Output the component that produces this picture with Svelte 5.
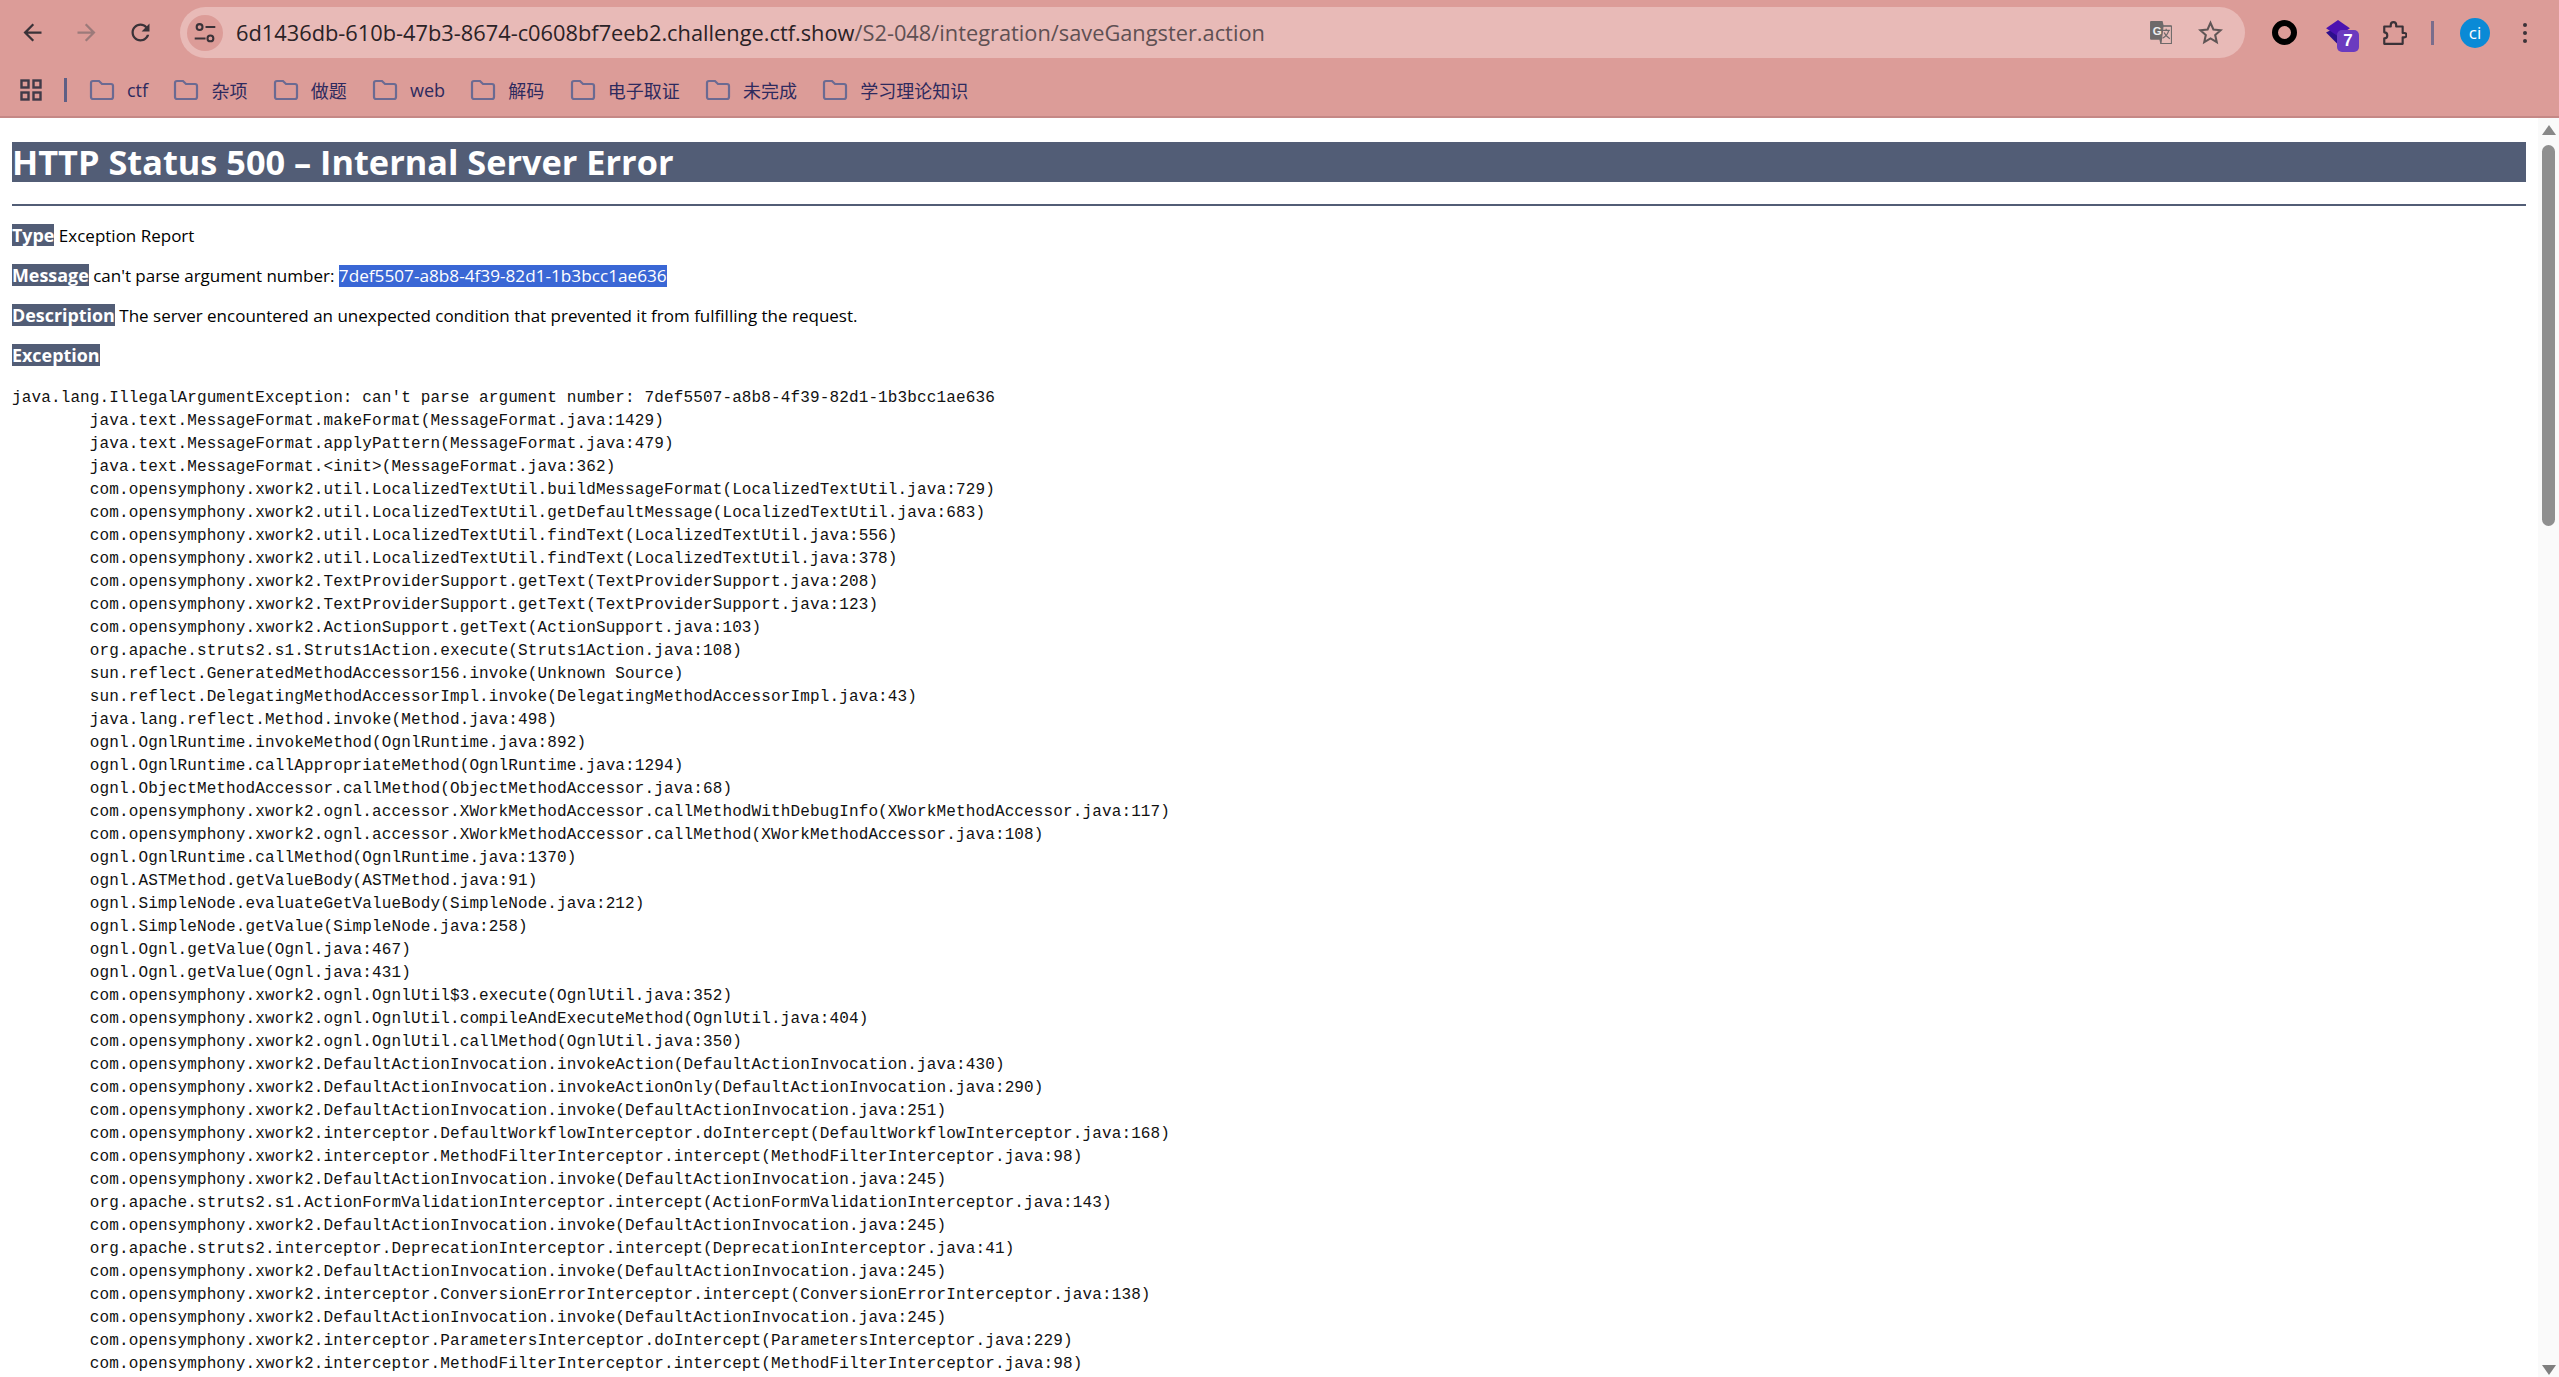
<script>
  const bookmarks = ['ctf', '杂项', '做题', 'web', '解码', '电子取证', '未完成', '学习理论知识'];

  const frames = [
    'java.text.MessageFormat.makeFormat(MessageFormat.java:1429)',
    'java.text.MessageFormat.applyPattern(MessageFormat.java:479)',
    'java.text.MessageFormat.<init>(MessageFormat.java:362)',
    'com.opensymphony.xwork2.util.LocalizedTextUtil.buildMessageFormat(LocalizedTextUtil.java:729)',
    'com.opensymphony.xwork2.util.LocalizedTextUtil.getDefaultMessage(LocalizedTextUtil.java:683)',
    'com.opensymphony.xwork2.util.LocalizedTextUtil.findText(LocalizedTextUtil.java:556)',
    'com.opensymphony.xwork2.util.LocalizedTextUtil.findText(LocalizedTextUtil.java:378)',
    'com.opensymphony.xwork2.TextProviderSupport.getText(TextProviderSupport.java:208)',
    'com.opensymphony.xwork2.TextProviderSupport.getText(TextProviderSupport.java:123)',
    'com.opensymphony.xwork2.ActionSupport.getText(ActionSupport.java:103)',
    'org.apache.struts2.s1.Struts1Action.execute(Struts1Action.java:108)',
    'sun.reflect.GeneratedMethodAccessor156.invoke(Unknown Source)',
    'sun.reflect.DelegatingMethodAccessorImpl.invoke(DelegatingMethodAccessorImpl.java:43)',
    'java.lang.reflect.Method.invoke(Method.java:498)',
    'ognl.OgnlRuntime.invokeMethod(OgnlRuntime.java:892)',
    'ognl.OgnlRuntime.callAppropriateMethod(OgnlRuntime.java:1294)',
    'ognl.ObjectMethodAccessor.callMethod(ObjectMethodAccessor.java:68)',
    'com.opensymphony.xwork2.ognl.accessor.XWorkMethodAccessor.callMethodWithDebugInfo(XWorkMethodAccessor.java:117)',
    'com.opensymphony.xwork2.ognl.accessor.XWorkMethodAccessor.callMethod(XWorkMethodAccessor.java:108)',
    'ognl.OgnlRuntime.callMethod(OgnlRuntime.java:1370)',
    'ognl.ASTMethod.getValueBody(ASTMethod.java:91)',
    'ognl.SimpleNode.evaluateGetValueBody(SimpleNode.java:212)',
    'ognl.SimpleNode.getValue(SimpleNode.java:258)',
    'ognl.Ognl.getValue(Ognl.java:467)',
    'ognl.Ognl.getValue(Ognl.java:431)',
    'com.opensymphony.xwork2.ognl.OgnlUtil$3.execute(OgnlUtil.java:352)',
    'com.opensymphony.xwork2.ognl.OgnlUtil.compileAndExecuteMethod(OgnlUtil.java:404)',
    'com.opensymphony.xwork2.ognl.OgnlUtil.callMethod(OgnlUtil.java:350)',
    'com.opensymphony.xwork2.DefaultActionInvocation.invokeAction(DefaultActionInvocation.java:430)',
    'com.opensymphony.xwork2.DefaultActionInvocation.invokeActionOnly(DefaultActionInvocation.java:290)',
    'com.opensymphony.xwork2.DefaultActionInvocation.invoke(DefaultActionInvocation.java:251)',
    'com.opensymphony.xwork2.interceptor.DefaultWorkflowInterceptor.doIntercept(DefaultWorkflowInterceptor.java:168)',
    'com.opensymphony.xwork2.interceptor.MethodFilterInterceptor.intercept(MethodFilterInterceptor.java:98)',
    'com.opensymphony.xwork2.DefaultActionInvocation.invoke(DefaultActionInvocation.java:245)',
    'org.apache.struts2.s1.ActionFormValidationInterceptor.intercept(ActionFormValidationInterceptor.java:143)',
    'com.opensymphony.xwork2.DefaultActionInvocation.invoke(DefaultActionInvocation.java:245)',
    'org.apache.struts2.interceptor.DeprecationInterceptor.intercept(DeprecationInterceptor.java:41)',
    'com.opensymphony.xwork2.DefaultActionInvocation.invoke(DefaultActionInvocation.java:245)',
    'com.opensymphony.xwork2.interceptor.ConversionErrorInterceptor.intercept(ConversionErrorInterceptor.java:138)',
    'com.opensymphony.xwork2.DefaultActionInvocation.invoke(DefaultActionInvocation.java:245)',
    'com.opensymphony.xwork2.interceptor.ParametersInterceptor.doIntercept(ParametersInterceptor.java:229)',
    'com.opensymphony.xwork2.interceptor.MethodFilterInterceptor.intercept(MethodFilterInterceptor.java:98)'
  ];

  const uuid = '7def5507-a8b8-4f39-82d1-1b3bcc1ae636';
  const trace = `java.lang.IllegalArgumentException: can't parse argument number: ${uuid}\n` + frames.map((f) => '\t' + f).join('\n');
</script>

<div class="window">
  <header class="chrome">
    <div class="toolbar">
      <div class="nav">
        <svg viewBox="0 0 24 24" class="icon"><path d="M20 11H7.830l5.590-5.590L12 4l-8 8 8 8 1.410-1.410L7.830 13H20v-2z" fill="#3a3238"/></svg>
        <svg viewBox="0 0 24 24" class="icon"><path d="M12 4l-1.410 1.410L16.170 11H4v2h12.170l-5.580 5.590L12 20l8-8z" fill="#9c7a7a"/></svg>
        <svg viewBox="0 0 24 24" class="icon"><path d="M17.650 6.350C16.200 4.900 14.210 4 12 4c-4.420 0-7.990 3.580-7.990 8s3.570 8 7.990 8c3.730 0 6.840-2.550 7.730-6h-2.080c-.82 2.330-3.040 4-5.650 4-3.310 0-6-2.690-6-6s2.690-6 6-6c1.660 0 3.140.69 4.220 1.780L13 11h7V4l-2.350 2.350z" fill="#3a3238"/></svg>
      </div>
      <div class="omnibox">
        <span class="tune">
          <svg viewBox="0 0 24 24" width="26" height="26"><g fill="none" stroke="#3a3238" stroke-width="1.900"><circle cx="7" cy="6.500" r="2.700"/><circle cx="17" cy="17" r="2.700"/><path d="M12.500 6.500h9M2.500 17h10"/></g></svg>
        </span>
        <span class="url">6d1436db-610b-47b3-8674-c0608bf7eeb2.challenge.ctf.show<span class="path">/S2-048/integration/saveGangster.action</span></span>
        <svg viewBox="0 0 24 24" class="translate"><path d="M2 1h11l1 4h7a1 1 0 0 1 1 1v16a1 1 0 0 1-1 1H11l-1-4H2a1 1 0 0 1-1-1V2a1 1 0 0 1 1-1z" fill="#6e6a6a"/><path d="M13.500 6H21.500V22.500H11.500z" fill="#e8bcb8" stroke="#6e6a6a"/><text x="3.500" y="14" font-family="Liberation Sans" font-size="11" font-weight="700" fill="#eee">G</text><path d="M13 10h7M16.500 8.500V10M19 10c-.8 3-3 6-6 7.500M14.500 12c1 2.500 3 4.500 5.500 6" fill="none" stroke="#6e6a6a" stroke-width="1.200"/></svg>
        <svg viewBox="0 0 24 24" class="star"><path d="M12 2.800l2.800 6.300 6.900.7-5.200 4.600 1.500 6.800-6-3.500-6 3.500 1.500-6.800-5.200-4.600 6.900-.7z" fill="none" stroke="#5f5555" stroke-width="2"/></svg>
      </div>
      <div class="actions">
        <span class="ring"></span>
        <span class="ext">
          <svg viewBox="0 0 24 24" width="26" height="26"><path d="M1 11.500 12 6l9 5.500-9 11z" fill="#2c0f8c"/><path d="M1 7.500 12 0l11 7.500-11 7.500z" fill="#4b12b0"/></svg>
          <span class="badge">7</span>
        </span>
        <svg viewBox="0 0 24 24" class="puzzle"><path d="M3 6h6V4.500a2.500 2.500 0 0 1 5 0V6h6v6h1.500a2 2 0 0 1 0 4H20v6H3v-5a2.800 2.800 0 0 0 0-5.600z" fill="none" stroke="#3a3238" stroke-width="2" stroke-linejoin="round"/></svg>
        <span class="vsep"></span>
        <span class="avatar">ci</span>
        <span class="dots"><i></i><i></i><i></i></span>
      </div>
    </div>
    <div class="bookmarks">
      <svg viewBox="0 0 22 22" class="apps"><g fill="none" stroke="#3f3a48" stroke-width="2.400"><rect x="1.500" y="1.500" width="7" height="7"/><rect x="13.500" y="1.500" width="7" height="7"/><rect x="1.500" y="13.500" width="7" height="7"/><rect x="13.500" y="13.500" width="7" height="7"/></g></svg>
      <span class="bsep"></span>
      {#each bookmarks as name}
        <span class="bookmark">
          <svg viewBox="0 0 26 22" class="folder"><path d="M2 4a2 2 0 0 1 2-2h6l3 3h9a2 2 0 0 1 2 2v11a2 2 0 0 1-2 2H4a2 2 0 0 1-2-2z" fill="none" stroke="#6b6a92" stroke-width="2.200"/></svg>
          {name}
        </span>
      {/each}
    </div>
  </header>

  <div class="viewport">
    <main class="page">
      <h1>HTTP Status 500 – Internal Server Error</h1>
      <hr />
      <p><b>Type</b> Exception Report</p>
      <p><b>Message</b> can't parse argument number: <span class="selected">{uuid}</span></p>
      <p><b>Description</b> The server encountered an unexpected condition that prevented it from fulfilling the request.</p>
      <p><b>Exception</b></p>
      <pre>{trace}</pre>
    </main>
    <aside class="scrollbar">
      <span class="arrow up"></span>
      <span class="thumb"></span>
      <span class="arrow down"></span>
    </aside>
  </div>
</div>

<style>
  :global(body) {
    margin: 0;
    background: #fff;
  }

  .window {
    height: 100vh;
    display: flex;
    flex-direction: column;
    overflow: hidden;
    font-family: "Open Sans", "Noto Sans CJK SC", sans-serif;
  }

  .chrome {
    flex: none;
    height: 118px;
    background: #dc9c98;
    border-bottom: 2px solid #c58886;
    box-sizing: border-box;
  }

  .toolbar {
    height: 65px;
    padding-top: 7px;
    box-sizing: border-box;
    display: flex;
    align-items: flex-start;
  }

  .nav {
    width: 180px;
    height: 51px;
    padding-left: 19px;
    box-sizing: border-box;
    display: flex;
    align-items: center;
    gap: 27px;
  }

  .icon {
    width: 27px;
    height: 27px;
    flex: none;
  }

  .omnibox {
    width: 2065px;
    height: 51px;
    background: #e8bab7;
    border-radius: 26px;
    display: flex;
    align-items: center;
    padding: 0 22px 0 7px;
    box-sizing: border-box;
  }

  .tune {
    width: 36px;
    height: 36px;
    border-radius: 50%;
    background: #dc9c98;
    display: flex;
    align-items: center;
    justify-content: center;
    flex: none;
  }

  .url {
    margin-left: 13px;
    flex: 1;
    font-size: 21.800px;
    color: #2a2226;
    white-space: nowrap;
  }

  .path {
    color: #5f5053;
  }

  .translate {
    width: 25px;
    height: 25px;
    margin-right: 24px;
    flex: none;
  }

  .star {
    width: 25px;
    height: 25px;
    flex: none;
  }

  .actions {
    flex: 1;
    height: 51px;
    display: flex;
    align-items: center;
    padding-left: 27px;
  }

  .ring {
    width: 25px;
    height: 25px;
    border: 6px solid #000;
    border-radius: 50%;
    box-sizing: border-box;
    flex: none;
  }

  .ext {
    position: relative;
    width: 26px;
    height: 26px;
    margin-left: 28px;
    flex: none;
  }

  .badge {
    position: absolute;
    left: 12px;
    top: 10px;
    width: 22px;
    height: 22px;
    background: #6b3bbf;
    border-radius: 5px;
    color: #fff;
    font-family: "Liberation Sans", sans-serif;
    font-size: 17px;
    font-weight: 700;
    line-height: 22px;
    text-align: center;
  }

  .puzzle {
    width: 26px;
    height: 26px;
    margin-left: 30px;
    flex: none;
  }

  .vsep {
    width: 3px;
    height: 24px;
    background: #7a6d8c;
    margin-left: 24px;
    flex: none;
  }

  .avatar {
    width: 30px;
    height: 30px;
    border-radius: 50%;
    background: #0a8ad6;
    color: #fff;
    font-size: 17px;
    line-height: 30px;
    text-align: center;
    margin-left: 26px;
    flex: none;
  }

  .dots {
    margin-left: 33px;
    display: flex;
    flex-direction: column;
    gap: 4px;
  }

  .dots i {
    width: 4px;
    height: 4px;
    border-radius: 50%;
    background: #3a3238;
  }

  .bookmarks {
    height: 50px;
    display: flex;
    align-items: center;
    padding-left: 20px;
    font-size: 18px;
    color: #2e2a5e;
  }

  .apps {
    width: 22px;
    height: 22px;
    flex: none;
  }

  .bsep {
    width: 3px;
    height: 24px;
    background: #5f5f85;
    margin: 0 22px;
    flex: none;
  }

  .bookmark {
    display: flex;
    align-items: center;
    gap: 12px;
    margin-right: 25.300px;
    white-space: nowrap;
  }

  .folder {
    width: 26px;
    height: 22px;
    flex: none;
  }

  .viewport {
    flex: 1;
    min-height: 0;
    display: flex;
  }

  .page {
    flex: 1;
    min-width: 0;
    padding: 24px 12px 0;
    overflow: hidden;
    color: #000;
  }

  h1 {
    margin: 0;
    height: 40px;
    background: #525d76;
    color: #fff;
    font-size: 34.300px;
    line-height: 40px;
    font-weight: 700;
  }

  hr {
    height: 2px;
    margin: 22px 0 18px;
    border: 0;
    background: #525d76;
  }

  p {
    margin: 0 0 18px;
    height: 22px;
    font-size: 17px;
    line-height: 22px;
  }

  b {
    display: inline-block;
    background: #525d76;
    color: #fff;
    height: 22px;
    font-size: 17.900px;
  }

  .selected {
    display: inline-block;
    height: 22px;
    background: #3a67d5;
    color: #fff;
    font-size: 17.200px;
  }

  pre {
    margin: 21px 0 0;
    font-family: "Liberation Mono", monospace;
    font-size: 16px;
    letter-spacing: 0.13px;
    line-height: 23px;
    tab-size: 8;
    color: #111;
  }

  .scrollbar {
    flex: none;
    width: 21px;
    background: #fafafa;
    display: flex;
    flex-direction: column;
    align-items: center;
    padding: 7px 0 2px;
    box-sizing: border-box;
  }

  .arrow {
    width: 0;
    height: 0;
    border-left: 7px solid transparent;
    border-right: 7px solid transparent;
    flex: none;
  }

  .up {
    border-bottom: 10px solid #888;
  }

  .down {
    border-top: 10px solid #7f7f7f;
    margin-top: auto;
  }

  .thumb {
    width: 13px;
    height: 381px;
    margin-top: 10px;
    background: #8f8f8f;
    border-radius: 7px;
  }
</style>
